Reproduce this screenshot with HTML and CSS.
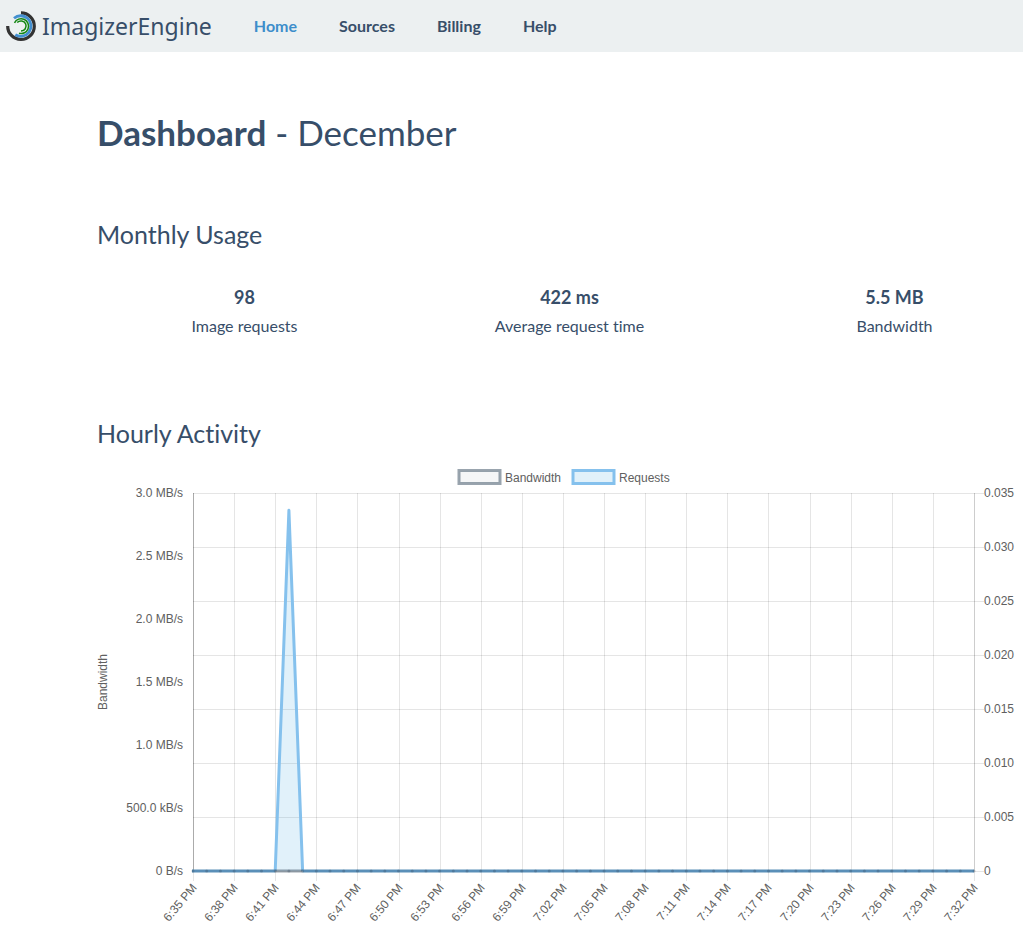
FILE: index.html
```
<!DOCTYPE html>
<html lang="en">
<head>
  <meta charset="utf-8">
  <title>ImagizerEngine - Dashboard</title>
  <link rel="stylesheet" href="styles.css">
</head>
<body>
  <header class="navbar">
    <a class="brand" href="#">
      <svg class="logo" viewBox="0 0 32 32" aria-hidden="true">
        <path d="M16 2.9A13.3 13.3 0 1 1 2.7 16" stroke="#333" stroke-width="3.2"/>
        <path d="M9 8.2A10.3 10.3 0 1 1 10.3 24.8" stroke="#428fd0" stroke-width="2.8"/>
        <path d="M9.5 12.8A7.4 7.4 0 1 1 14 23.2" stroke="#138613" stroke-width="1.5"/>
        <path d="M12.2 12.6A5.1 5.1 0 1 1 16 21.1" stroke="#138613" stroke-width="1.5"/>
      </svg>
      <span>ImagizerEngine</span>
    </a>
    <nav class="menu">
      <a class="active" href="#">Home</a>
      <a href="#">Sources</a>
      <a href="#">Billing</a>
      <a href="#">Help</a>
    </nav>
  </header>

  <main class="container">
    <h1><strong>Dashboard</strong> - December</h1>

    <h2>Monthly Usage</h2>
    <div class="stats">
      <div class="stat">
        <div class="value">98</div>
        <div>Image requests</div>
      </div>
      <div class="stat">
        <div class="value">422 ms</div>
        <div>Average request time</div>
      </div>
      <div class="stat">
        <div class="value">5.5 MB</div>
        <div>Bandwidth</div>
      </div>
    </div>

    <h2>Hourly Activity</h2>
    <svg class="chart" id="chart" role="img" aria-label="Hourly activity"></svg>
  </main>

  <script src="chart.js"></script>
</body>
</html>
```
FILE: styles.css
```
body {
  margin: 0;
  color: #374e69;
  font-family: Lato, sans-serif;
  font-size: 16px;
  font-variant-ligatures: none;
  line-height: 24px;
  overflow-x: hidden;
}

a {
  color: inherit;
  text-decoration: none;
}

/* top bar */
.navbar {
  display: flex;
  align-items: center;
  gap: 42px;
  height: 52px;
  padding-left: 5px;
  background-color: #ecf0f1;
}

.brand {
  display: flex;
  align-items: center;
  gap: 5px;
  font-family: "Noto Sans", sans-serif;
  font-size: 23px;
}

.logo {
  width: 32px;
  height: 32px;
  fill: none;
}

.menu {
  display: flex;
  gap: 42px;
  font-size: 16px;
  font-weight: bold;
}

.menu .active {
  color: #3d8ecb;
}

/* page */
.container {
  padding-left: 97px;
}

h1,
h2 {
  margin: 0;
  font-weight: normal;
}

h1 {
  padding: 60px 0;
  font-size: 35px;
  line-height: 40px;
}

h2 {
  padding: 8px 0;
  font-size: 25px;
  line-height: 28px;
}

.stats {
  display: grid;
  grid-template-columns: repeat(3, 1fr);
  margin: 29px -34px 73px -15px;
  text-align: center;
}

.value {
  margin-bottom: 5px;
  font-size: 18px;
  font-weight: bold;
}

/* chart */
.chart {
  display: block;
  width: 100%;
  height: 460px;
  margin-top: 10px;
  fill: none;
}

.chart text {
  fill: #606060;
  font-family: "Liberation Sans", Arial, sans-serif;
  font-size: 12px;
}

.chart .end {
  text-anchor: end;
}

.chart .middle {
  text-anchor: middle;
}

.grid {
  stroke: rgba(0, 0, 0, 0.1);
}

.axis {
  stroke: rgba(0, 0, 0, 0.25);
}

.requests {
  fill: rgba(52, 160, 219, 0.15);
  stroke: #85c1ed;
  stroke-width: 3;
}

.bandwidth {
  fill: rgba(52, 73, 94, 0.05);
  stroke: rgba(52, 73, 94, 0.5);
  stroke-width: 3;
}

.baseline {
  stroke: #5a8fb8;
  stroke-width: 3;
}

.point {
  fill: rgba(52, 73, 94, 0.3);
}
```
FILE: chart.js
```
const chart = document.getElementById("chart");

const leftLabels = ["3.0 MB/s", "2.5 MB/s", "2.0 MB/s", "1.5 MB/s", "1.0 MB/s", "500.0 kB/s", "0 B/s"];
const rightLabels = ["0.035", "0.030", "0.025", "0.020", "0.015", "0.010", "0.005", "0"];

// one request rate per minute, from 6:35 PM to 7:32 PM
const requests = new Array(58).fill(0);
requests[7] = 0.0334;

function line(x1, y1, x2, y2, cls) {
  return `<line x1="${x1}" y1="${y1}" x2="${x2}" y2="${y2}" class="${cls}"/>`;
}

function timeLabel(i) {
  const minutes = 35 + i;
  const hour = 6 + Math.floor(minutes / 60);
  return `${hour}:${String(minutes % 60).padStart(2, "0")} PM`;
}

function drawChart() {
  const width = chart.clientWidth;
  const left = 96;
  const right = width - 49;
  const top = 28;
  const bottom = 406;
  const step = (right - left) / (requests.length - 1);
  let out = "";

  // legend
  const mid = Math.round(width / 2) + 4;
  out += `<rect x="${mid - 105}" y="5.5" width="41" height="13" class="bandwidth"/>`;
  out += `<text x="${mid - 59}" y="17">Bandwidth</text>`;
  out += `<rect x="${mid + 9}" y="5.5" width="41" height="13" class="requests"/>`;
  out += `<text x="${mid + 55}" y="17">Requests</text>`;

  // vertical lines and times
  for (let i = 0; i < requests.length; i += 3) {
    const x = Math.round(left + i * step) + 0.5;
    out += line(x, top, x, bottom + 10, "grid");
    out += `<text class="end" transform="translate(${x + 4} ${bottom + 17}) rotate(-50)">${timeLabel(i)}</text>`;
  }
  out += line(left + 0.5, top, left + 0.5, bottom, "axis");
  out += line(right + 0.5, top, right + 0.5, bottom, "grid");

  // horizontal lines and the two scales
  rightLabels.forEach((label, i) => {
    const y = top + i * (bottom - top) / 7;
    out += line(left, y + 0.5, right + 10, y + 0.5, "grid");
    out += `<text x="${right + 10}" y="${y + 4}">${label}</text>`;
  });
  leftLabels.forEach((label, i) => {
    const y = top + i * (bottom - top) / 6;
    out += `<text class="end" x="${left - 10}" y="${y + 4}">${label}</text>`;
  });
  out += `<text class="middle" transform="translate(10 ${(top + bottom) / 2}) rotate(-90)">Bandwidth</text>`;

  // data
  const peak = requests.indexOf(Math.max(...requests));
  const peakY = bottom - requests[peak] / 0.035 * (bottom - top);
  const x1 = left + (peak - 1) * step;
  const x2 = left + (peak + 1) * step;
  out += `<path d="M${x1} ${bottom}L${left + peak * step} ${peakY}L${x2} ${bottom}" class="requests" stroke-linejoin="round"/>`;
  out += line(left - 1, bottom, x1, bottom, "baseline");
  out += line(x1, bottom, x2, bottom, "bandwidth");
  out += line(x2, bottom, right, bottom, "baseline");
  requests.forEach((value, i) => {
    out += `<circle cx="${left + i * step}" cy="${bottom}" r="1.5" class="point"/>`;
  });

  chart.innerHTML = out;
}

drawChart();
window.addEventListener("resize", drawChart);
```
